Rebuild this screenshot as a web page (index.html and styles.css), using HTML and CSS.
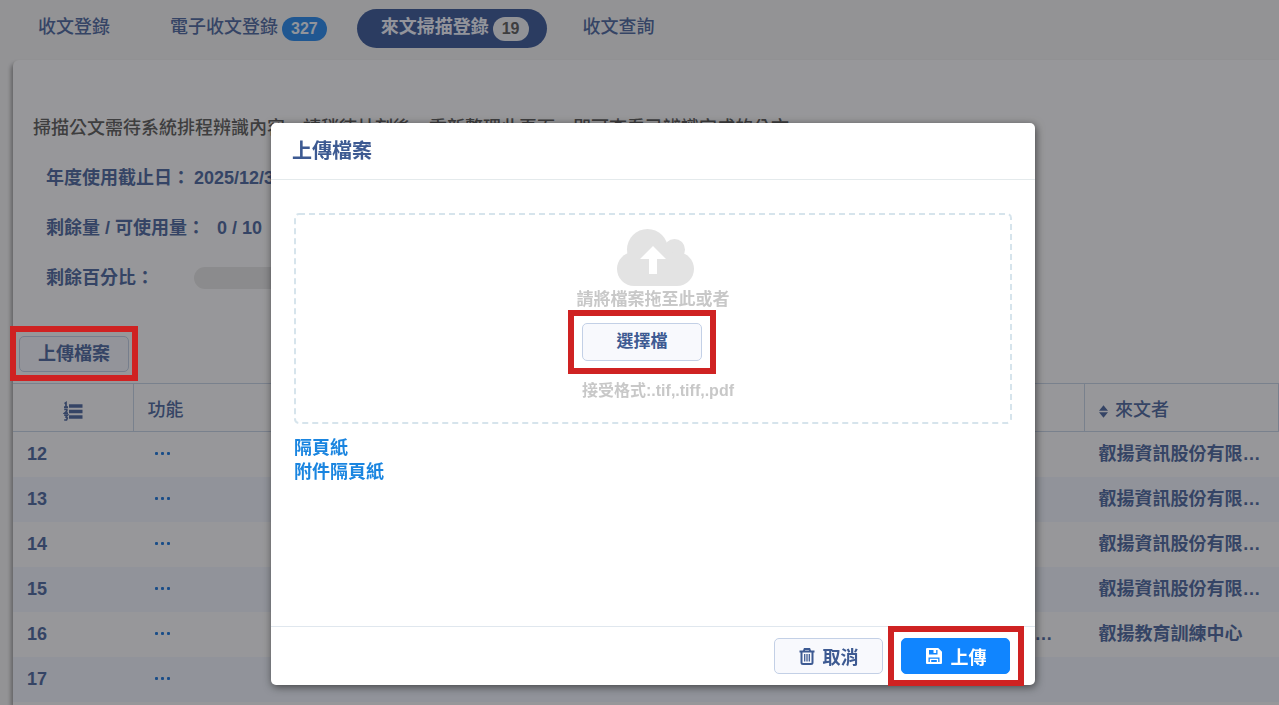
FILE: index.html
```html
<!DOCTYPE html>
<html lang="zh-Hant-TW">
<head>
<meta charset="utf-8">
<meta name="viewport" content="width=device-width, initial-scale=1">
<title>來文掃描登錄</title>
<link rel="stylesheet" href="styles.css">
</head>
<body>
<nav class="tabs">
  <a class="tab" href="#">收文登錄</a>
  <a class="tab tab-counted" href="#">電子收文登錄<span class="badge badge-blue">327</span></a>
  <a class="tab tab-counted tab-active" href="#">來文掃描登錄<span class="badge badge-light">19</span></a>
  <a class="tab" href="#">收文查詢</a>
</nav>
<main class="panel">
  <p class="notice">掃描公文需待系統排程辨識內容，請稍待片刻後，重新整理此頁面，即可查看已辨識完成的公文</p>
  <dl class="info">
    <div class="info-row"><dt>年度使用截止日：</dt><dd>2025/12/31</dd></div>
    <div class="info-row info-row-wide"><dt>剩餘量 / 可使用量：</dt><dd>0 / 10</dd></div>
    <div class="info-row"><dt>剩餘百分比：</dt><dd class="meter"></dd></div>
  </dl>
  <div class="toolbar">
    <span class="marked"><button class="btn btn-page" type="button">上傳檔案</button></span>
  </div>
  <table class="grid">
    <colgroup><col class="col-no"><col class="col-fn"><col class="col-mid"><col class="col-subject"><col class="col-from"></colgroup>
    <thead>
      <tr>
        <th class="center"><svg class="list-icon" viewBox="0 0 20 20" width="20" height="20" role="img" aria-label="序號"><path d="M6 5h13.500M6 10.500h13.500M6 16h13.500" stroke="currentColor" stroke-width="3.600"/><path d="M1.500 2.600 3 1.600v4.600M1 6.200h4M1.200 8.400h2.600v1.600L1.500 12.200H5M1.200 14.200h3.300L3 16l1.300 1-.8 2H1.200" fill="none" stroke="currentColor" stroke-width="1.700"/></svg></th>
        <th>功能</th>
        <th></th>
        <th></th>
        <th><svg class="sort-icon" viewBox="0 0 9 13" width="9" height="13" aria-hidden="true"><path d="M4.500.3 9 5.700H0zM4.500 12.700 0 7.300h9z" fill="currentColor"/></svg>來文者</th>
      </tr>
    </thead>
    <tbody>
      <tr><td>12</td><td><button class="more" type="button" aria-label="更多"><i></i><i></i><i></i></button></td><td></td><td></td><td>叡揚資訊股份有限…</td></tr>
      <tr><td>13</td><td><button class="more" type="button" aria-label="更多"><i></i><i></i><i></i></button></td><td></td><td></td><td>叡揚資訊股份有限…</td></tr>
      <tr><td>14</td><td><button class="more" type="button" aria-label="更多"><i></i><i></i><i></i></button></td><td></td><td></td><td>叡揚資訊股份有限…</td></tr>
      <tr><td>15</td><td><button class="more" type="button" aria-label="更多"><i></i><i></i><i></i></button></td><td></td><td></td><td>叡揚資訊股份有限…</td></tr>
      <tr><td>16</td><td><button class="more" type="button" aria-label="更多"><i></i><i></i><i></i></button></td><td></td><td class="clipped">…</td><td>叡揚教育訓練中心</td></tr>
      <tr><td>17</td><td><button class="more" type="button" aria-label="更多"><i></i><i></i><i></i></button></td><td></td><td></td><td></td></tr>
    </tbody>
  </table>
</main>

<div class="overlay">
  <section class="modal" role="dialog" aria-labelledby="modal-title">
    <header class="modal-head"><h2 id="modal-title">上傳檔案</h2></header>
    <div class="modal-body">
      <div class="drop">
        <svg class="outline" aria-hidden="true"><rect x="1" y="1" width="100%" height="100%" rx="4"/></svg>
        <svg class="cloud" viewBox="0 0 77 57" width="77" height="57" aria-hidden="true"><g fill="#e3e3e3"><circle cx="30.500" cy="20.500" r="20.500"/><circle cx="57.500" cy="20.500" r="10.500"/><circle cx="17" cy="40" r="17"/><circle cx="60" cy="40" r="17"/><path d="M17 25h43v32H17z"/></g><path d="M36 17 49 30h-9v15h-8V30h-9z" fill="#fff"/></svg>
        <p class="drop-text">請將檔案拖至此或者</p>
        <span class="marked marked-pick"><button class="btn btn-pick" type="button">選擇檔</button></span>
        <p class="drop-text drop-formats">接受格式:.tif,.tiff,.pdf</p>
      </div>
      <a class="link" href="#">隔頁紙</a>
      <a class="link" href="#">附件隔頁紙</a>
    </div>
    <footer class="modal-foot">
      <button class="btn" type="button"><svg viewBox="0 0 16 17" width="16" height="17" aria-hidden="true"><path d="M.5 3.500h15M4.800 3 5.600 1h4.800l.8 2" fill="none" stroke="currentColor" stroke-width="1.900"/><path d="M2.500 4v10.500a1.500 1.500 0 0 0 1.500 1.500h8a1.500 1.500 0 0 0 1.500-1.500V4" fill="none" stroke="currentColor" stroke-width="2"/><path d="M5.700 6v7.500M8 6v7.500M10.300 6v7.500" stroke="currentColor" stroke-width="1.300"/></svg><span class="btn-label">取消</span></button>
      <span class="marked marked-save"><button class="btn btn-primary" type="button"><svg viewBox="0 0 18 18" width="18" height="18" aria-hidden="true"><path fill-rule="evenodd" fill="currentColor" d="M2 1h11.200L17 4.800V16a1 1 0 0 1-1 1H2a1 1 0 0 1-1-1V2a1 1 0 0 1 1-1ZM4 3v4.500h8.500V3h-1.300v3H8.500V3ZM3.500 10.500V15h1.300v-3.300h8.400V15h1.300v-4.500ZM6.200 13v2h5.600v-2Z"/></svg><span class="btn-label">上傳</span></button></span>
    </footer>
  </section>
</div>
</body>
</html>
```
FILE: styles.css
```css
* { box-sizing: border-box; }
body {
  margin: 0;
  height: 100vh;
  overflow: hidden;
  background: #f4f4f6;
  color: #5871a6;
  font: 500 18px/24px "Liberation Sans", "Noto Sans CJK TC", sans-serif;
}
button { font: inherit; }
p, dl, dd, h2 { margin: 0; }

.tabs { display: flex; gap: 12px; padding: 9px 14px 12px; }
.tab {
  display: flex;
  gap: 4px;
  height: 39px;
  padding: 6px 24px;
  border-radius: 20px;
  color: inherit;
  text-decoration: none;
}
.tab-counted { padding-right: 18px; }
.tab-active { background: #46639f; color: #f4f6ff; font-weight: 700; }
.badge {
  height: 24px;
  margin-top: 2px;
  padding: 0 9px;
  border-radius: 12px;
  font-size: 16px;
  font-weight: 700;
}
.badge-blue { background: #3590ee; color: #eef5ff; }
.badge-light { background: #f0f2f7; color: #666; }

.panel {
  margin-left: 13px;
  min-height: calc(100vh - 60px);
  border-radius: 6px 0 0;
  background: #fbfbfd;
  box-shadow: -2px 3px 4px rgba(0, 0, 0, .35);
}
.notice { padding: 56px 20px 0; color: #666; }
.info { padding: 13px 33px 0; font-weight: 700; }
.info-row { display: flex; align-items: center; height: 50px; }
.info dt { min-width: 148px; }
.info-row-wide dt { padding-right: 12px; }
.info .meter { width: 240px; height: 22px; border-radius: 11px; background: #e6e6e8; }
.toolbar { padding: 33px 6px 11px; }

.marked { position: relative; display: inline-flex; }
.marked::after {
  content: "";
  position: absolute;
  inset: -10px -9px -9px;
  border: 6px solid #cf2222;
  z-index: 20;
  pointer-events: none;
}
.marked-pick::after { inset: -13px -14px; }
.marked-save::after { inset: -12px -14px -12px -13px; }

.btn {
  display: inline-flex;
  align-items: center;
  justify-content: center;
  gap: 8px;
  height: 36px;
  min-width: 109px;
  padding: 0 18px;
  border: 1px solid #c3d0e6;
  border-radius: 5px;
  background: #f8f9fd;
  color: #3d5a92;
  font-weight: 700;
}
.btn-page { background: #f3f6fd; color: #5871a6; }
.btn-label { padding-top: 3px; }

.grid { width: 100%; border-collapse: collapse; table-layout: fixed; }
.col-no { width: 120px; }
.col-fn { width: 160px; }
.col-subject { width: 150px; }
.col-from { width: 194px; }
.grid th {
  height: 48px;
  padding: 4px 14px 0;
  border: 1px solid #c9d5e8;
  border-left-width: 0;
  font-weight: 500;
  text-align: left;
}
.grid th:nth-child(3) { border-right-width: 0; }
.grid th.center { text-align: center; }
.grid td { height: 45px; padding: 0 14px; font-weight: 700; white-space: nowrap; }
.grid tbody tr:nth-child(even) { background: #f0f4fd; }
.grid .clipped { padding-right: 32px; text-align: right; }
.list-icon { vertical-align: -5px; }
.sort-icon { margin-right: 7px; vertical-align: -2px; }
.more { display: flex; gap: 3px; padding: 6px 8px 8px; border: 0; background: none; color: #2a7fdf; }
.more i { width: 3px; height: 3px; border-radius: 1px; background: currentColor; }

.overlay {
  position: fixed;
  inset: 0;
  z-index: 10;
  display: flex;
  justify-content: center;
  align-items: flex-start;
  padding: 123px 0 0 27px;
  background: rgba(2, 3, 6, .4);
  color: #3d5a92;
}
.modal {
  width: 764px;
  max-width: 90%;
  border-radius: 5px;
  background: #fff;
  box-shadow: 1px 2px 8px rgba(0, 0, 0, .55);
}
.modal-head { padding: 16px 21px 15px; border-bottom: 1px solid #e4eaec; }
.modal-head h2 { font-size: 20px; line-height: 25px; font-weight: 700; }
.modal-body { min-height: 446px; padding: 33px 23px; }
.drop {
  position: relative;
  display: flex;
  flex-direction: column;
  align-items: center;
  height: 211px;
  margin-bottom: 12px;
  padding-top: 16px;
}
.outline { position: absolute; inset: 0; width: 100%; height: 100%; }
.outline rect {
  width: calc(100% - 2px);
  height: calc(100% - 2px);
  fill: none;
  stroke: #d6e4ec;
  stroke-width: 2;
  stroke-dasharray: 6 4;
}
.cloud { margin: 0 0 2px 4px; }
.drop-text { color: #c8c8c8; font-size: 17px; font-weight: 700; }
.drop-formats { margin: 18px 0 0 10px; font-size: 16px; }
.drop .marked { margin: 11px 22px 0 0; }
.btn-pick { width: 120px; height: 38px; font-size: 17px; }
.link { display: block; width: fit-content; color: #1a85e0; font-weight: 700; text-decoration: none; }
.modal-foot {
  display: flex;
  justify-content: flex-end;
  gap: 18px;
  padding: 11px 25px 11px;
  border-top: 1px solid #e0e7ee;
}
.btn-primary { border-color: #1085ff; background: #1085ff; color: #fff; }
```
